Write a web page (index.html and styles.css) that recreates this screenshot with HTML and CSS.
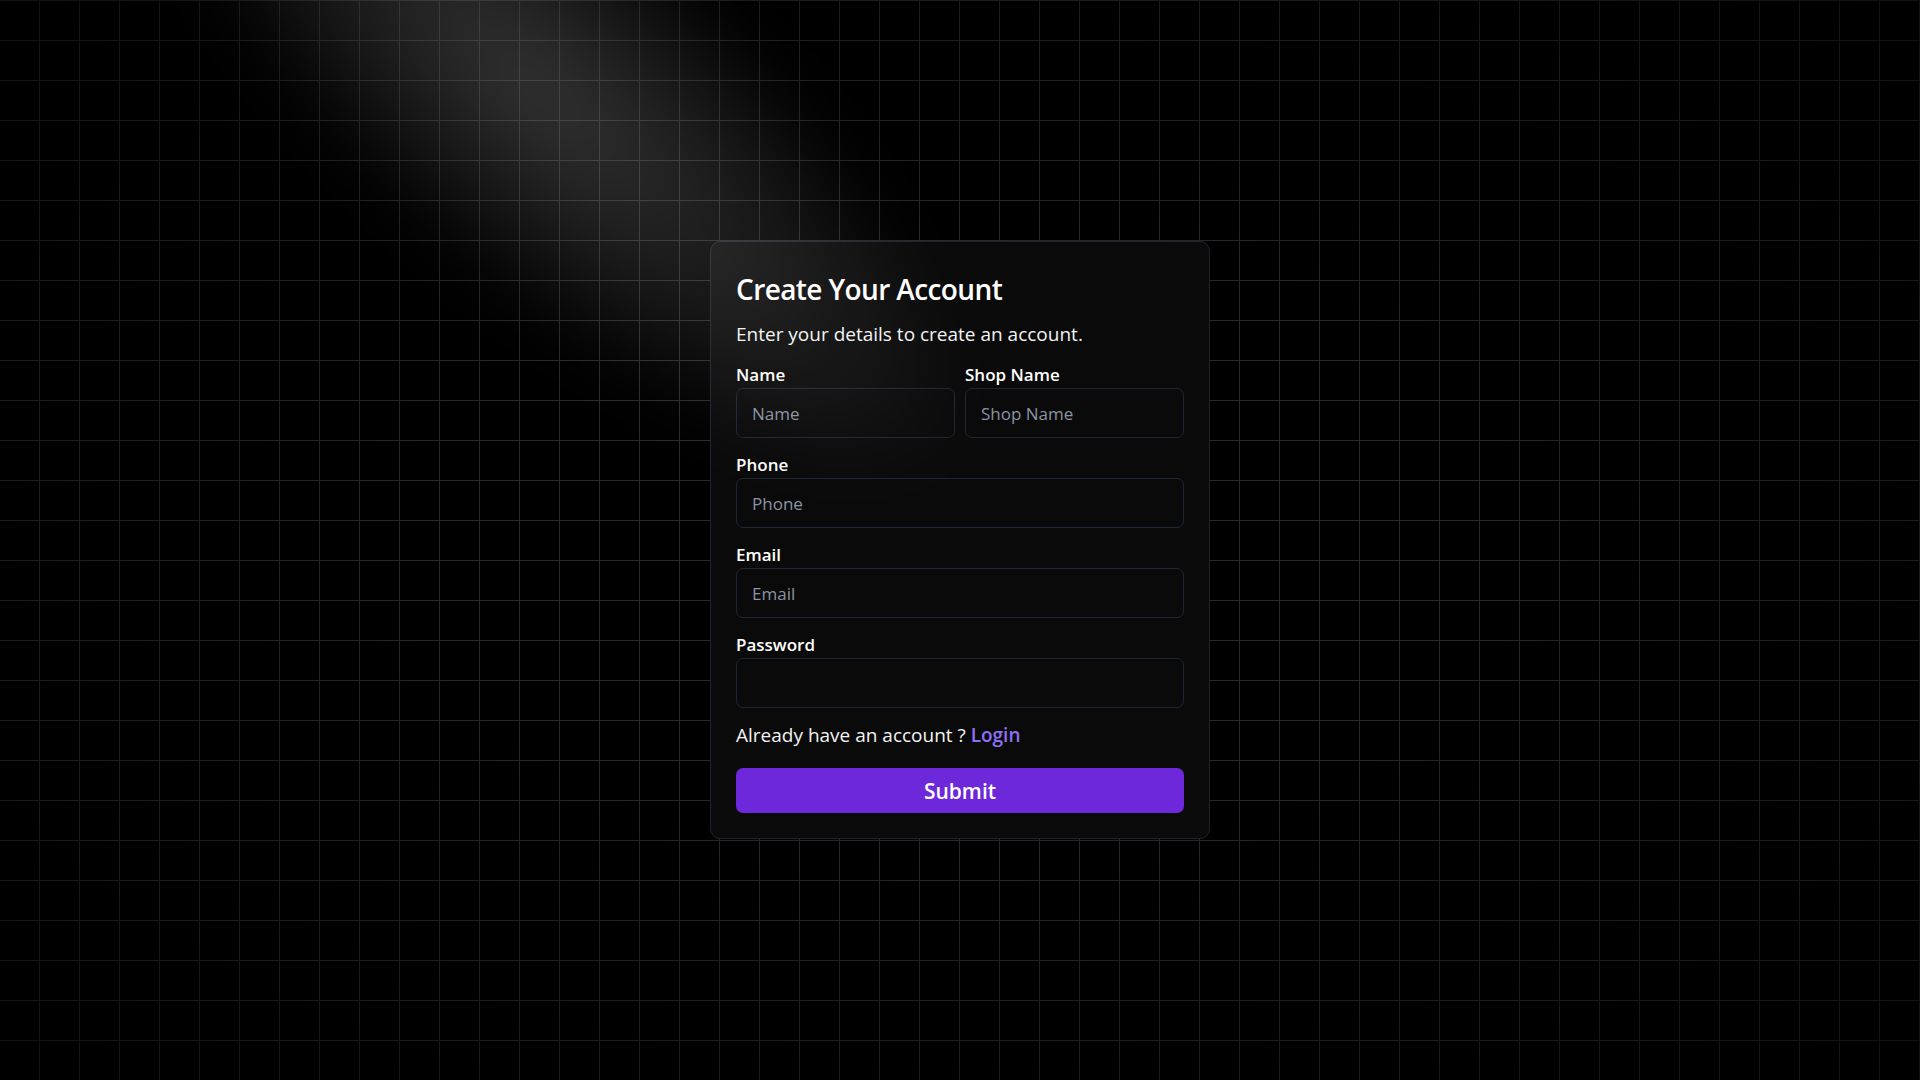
FILE: index.html
```html
<!DOCTYPE html>
<html lang="en">
<head>
<meta charset="utf-8">
<title>Create Your Account</title>
<link rel="stylesheet" href="styles.css">
</head>
<body>
<div class="page">
  <div class="grid-bg"></div>
  <div class="spotlight"></div>
  <form class="card">
    <h1 class="title">Create Your Account</h1>
    <p class="subtitle">Enter your details to create an account.</p>
    <div class="row">
      <div class="field">
        <label class="label" for="name">Name</label>
        <input class="input" id="name" type="text" placeholder="Name">
      </div>
      <div class="field">
        <label class="label" for="shop">Shop Name</label>
        <input class="input" id="shop" type="text" placeholder="Shop Name">
      </div>
    </div>
    <div class="field">
      <label class="label" for="phone">Phone</label>
      <input class="input" id="phone" type="text" placeholder="Phone">
    </div>
    <div class="field">
      <label class="label" for="email">Email</label>
      <input class="input" id="email" type="email" placeholder="Email">
    </div>
    <div class="field">
      <label class="label" for="password">Password</label>
      <input class="input" id="password" type="password">
    </div>
    <p class="switch">Already have an account ? <a class="link" href="#">Login</a></p>
    <button class="submit" type="button">Submit</button>
  </form>
</div>
</body>
</html>
```
FILE: styles.css
```css
* { box-sizing: border-box; }
html, body { margin: 0; padding: 0; height: 100%; }
body {
  background: #000;
  font-family: "Open Sans", "Noto Sans", sans-serif;
  color: #fff;
}
.page {
  position: relative;
  width: 100%;
  height: 100vh;
  overflow: hidden;
  display: flex;
  align-items: center;
  justify-content: center;
}
.grid-bg {
  position: absolute;
  inset: 0;
  background-image:
    linear-gradient(to right, #2b2b2b 1px, transparent 1px),
    linear-gradient(to bottom, #2b2b2b 1px, transparent 1px);
  background-size: 40px 40px;
  background-position: 39px 0;
  -webkit-mask-image: radial-gradient(ellipse at center, #000 30%, rgba(0,0,0,0.4) 100%);
  mask-image: radial-gradient(ellipse at center, #000 30%, rgba(0,0,0,0.4) 100%);
}
.spotlight {
  position: absolute;
  left: -10px;
  top: -100px;
  width: 1100px;
  height: 380px;
  transform: rotate(42deg);
  background: radial-gradient(closest-side, rgba(255,255,255,0.2), rgba(255,255,255,0.1) 50%, transparent 100%);
  filter: blur(30px);
  pointer-events: none;
  z-index: 2;
}
.card {
  position: relative;
  z-index: 1;
  width: 500px;
  background: #0a0a0a;
  border: 1px solid #1f2430;
  border-radius: 10px;
  padding: 25px;
  display: flex;
  flex-direction: column;
}
.title {
  margin: 0 0 8px;
  font-size: 28px;
  line-height: 44px;
  font-weight: 600;
  letter-spacing: -0.6px;
}
.subtitle {
  margin: 0 0 15px;
  font-size: 19px;
  line-height: 30px;
  color: #f2f2f2;
}
.row {
  display: grid;
  grid-template-columns: 1fr 1fr;
  gap: 10px;
}
.field {
  display: flex;
  flex-direction: column;
  margin-bottom: 16px;
}
.label {
  font-size: 17px;
  line-height: 22px;
  font-weight: 600;
  margin-bottom: 2px;
}
.input {
  height: 50px;
  width: 100%;
  background: transparent;
  border: 1px solid #1e2533;
  border-radius: 7px;
  padding: 0 15px;
  font-family: inherit;
  font-size: 17px;
  color: #fff;
  outline: none;
}
.input::placeholder { color: #8a94a3; }
.switch {
  margin: -4px 0 18px;
  font-size: 19px;
  line-height: 30px;
  color: #f2f2f2;
}
.link {
  color: #8d70f7;
  font-weight: 600;
  text-decoration: none;
}
.submit {
  height: 45px;
  width: 100%;
  border: none;
  border-radius: 7px;
  background: #6d28d9;
  color: #fff;
  font-family: inherit;
  font-size: 21px;
  font-weight: 600;
  cursor: pointer;
}
```
